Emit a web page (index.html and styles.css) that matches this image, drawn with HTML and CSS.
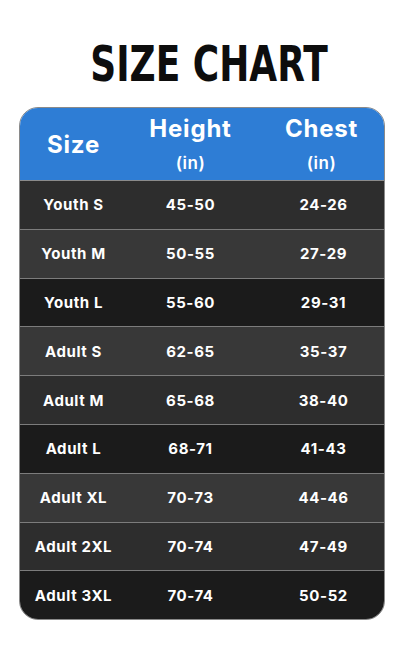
FILE: index.html
```html
<!DOCTYPE html>
<html>
<head>
<meta charset="utf-8">
<link rel="stylesheet" href="styles.css">
</head>
<body>
<div class="page">
  <div class="title-wrap"><h1 class="title">SIZE CHART</h1></div>
  <div class="chart">
    <div class="head">
      <div class="hcell size-col"><span class="hmain">Size</span></div>
      <div class="hcell"><span class="hmain">Height</span><span class="hsub">(in)</span></div>
      <div class="hcell chest-col"><span class="hmain">Chest</span><span class="hsub">(in)</span></div>
    </div>
    <div class="row r1"><span>Youth S</span><span>45-50</span><span>24-26</span></div>
    <div class="row r2"><span>Youth M</span><span>50-55</span><span>27-29</span></div>
    <div class="row r3"><span>Youth L</span><span>55-60</span><span>29-31</span></div>
    <div class="row r2"><span>Adult S</span><span>62-65</span><span>35-37</span></div>
    <div class="row r1"><span>Adult M</span><span>65-68</span><span>38-40</span></div>
    <div class="row r3"><span>Adult L</span><span>68-71</span><span>41-43</span></div>
    <div class="row r2"><span>Adult XL</span><span>70-73</span><span>44-46</span></div>
    <div class="row r1"><span>Adult 2XL</span><span>70-74</span><span>47-49</span></div>
    <div class="row r3 last"><span>Adult 3XL</span><span>70-74</span><span>50-52</span></div>
  </div>
</div>
</body>
</html>
```
FILE: styles.css
```css
html, body {
  margin: 0;
  padding: 0;
  background: #ffffff;
}
.page {
  width: 402px;
  height: 646px;
  display: flex;
  flex-direction: column;
  align-items: center;
}
.title-wrap {
  height: 70px;
  margin-top: 37px;
  display: flex;
  justify-content: center;
  padding-left: 16px;
}
.title {
  margin: 0;
  font-family: "DejaVu Sans", sans-serif;
  font-weight: 900;
  font-size: 50px;
  line-height: 54px;
  letter-spacing: 0px;
  color: #0d0d0d;
  white-space: nowrap;
  transform: scaleX(0.72);
}
.chart {
  width: 364px;
  margin-left: 1px;
  border: 1px solid #8a8a8a;
  border-radius: 19px;
  overflow: hidden;
  font-family: "Inter", "Open Sans", sans-serif;
  font-weight: 700;
  color: #ffffff;
}
.head {
  display: grid;
  grid-template-columns: 108px 126px 1fr;
  height: 72px;
  background: #2e7dd5;
  border-bottom: 1px solid #8a8a8a;
}
.hcell {
  display: flex;
  flex-direction: column;
  align-items: center;
  justify-content: center;
}
.chest-col {
  padding-left: 6px;
}
.size-col {
  padding-top: 2px;
}
.hmain {
  font-size: 24px;
  line-height: 28px;
  letter-spacing: 0.8px;
}
.hsub {
  font-size: 17px;
  line-height: 22px;
  font-weight: 600;
  margin-top: 9px;
  letter-spacing: 0.5px;
}
.row {
  display: grid;
  grid-template-columns: 108px 126px 1fr;
  align-items: center;
  height: 47.8px;
  border-bottom: 1px solid #7c7c7c;
  font-size: 15px;
  letter-spacing: 0.6px;
}
.row.last {
  border-bottom: none;
}
.row span {
  text-align: center;
}
.row span:last-child {
  padding-left: 10px;
}
.r1 { background: #2d2d2d; }
.r2 { background: #383838; }
.r3 { background: #1b1b1b; }
```
